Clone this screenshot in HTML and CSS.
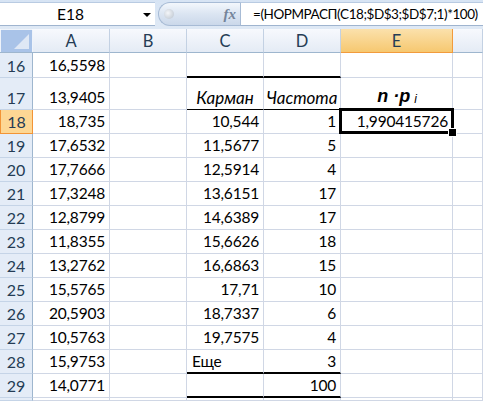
FILE: index.html
```html
<!DOCTYPE html>
<html>
<head>
<meta charset="utf-8">
<link rel="stylesheet" href="styles.css">
</head>
<body>
<div class="app">
  <div class="fbar">
    <div class="namebox"><span class="ref">E18</span><span class="arrow"></span></div>
    <div class="fxpill"><span class="knob"></span><span class="fx">fx</span></div>
    <div class="formula">=(НОРМРАСП(C18;$D$3;$D$7;1)*100)</div>
  </div>
  <div class="sheet">
    <div class="row hdr">
      <div class="corner"><svg width="33" height="24" viewBox="0 0 33 24"><rect x="0.5" y="0.5" width="32" height="23" fill="#a9c3e8" stroke="#ffffff" stroke-opacity="0.6"/><polygon points="29,5 29,20 14,20" fill="#dfe8f5"/></svg></div>
      <div class="ch">A</div><div class="ch">B</div><div class="ch">C</div><div class="ch">D</div><div class="ch sel">E</div><div class="ch"></div>
    </div>
    <div class="row r16">
      <div class="rh">16</div><div class="c num">16,5598</div><div class="c"></div><div class="c thickb"></div><div class="c thickb"></div><div class="c"></div><div class="c"></div>
    </div>
    <div class="row r17">
      <div class="rh">17</div><div class="c num">13,9405</div><div class="c"></div><div class="c it thinb">Карман</div><div class="c it thinb">Частота</div><div class="c npi"><b>n ·p</b><i>i</i></div><div class="c"></div>
    </div>
    <div class="row">
      <div class="rh sel">18</div><div class="c num">18,735</div><div class="c"></div><div class="c num">10,544</div><div class="c num">1</div><div class="c num active">1,990415726</div><div class="c"></div>
    </div>
    <div class="row">
      <div class="rh">19</div><div class="c num">17,6532</div><div class="c"></div><div class="c num">11,5677</div><div class="c num">5</div><div class="c"></div><div class="c"></div>
    </div>
    <div class="row">
      <div class="rh">20</div><div class="c num">17,7666</div><div class="c"></div><div class="c num">12,5914</div><div class="c num">4</div><div class="c"></div><div class="c"></div>
    </div>
    <div class="row">
      <div class="rh">21</div><div class="c num">17,3248</div><div class="c"></div><div class="c num">13,6151</div><div class="c num">17</div><div class="c"></div><div class="c"></div>
    </div>
    <div class="row">
      <div class="rh">22</div><div class="c num">12,8799</div><div class="c"></div><div class="c num">14,6389</div><div class="c num">17</div><div class="c"></div><div class="c"></div>
    </div>
    <div class="row">
      <div class="rh">23</div><div class="c num">11,8355</div><div class="c"></div><div class="c num">15,6626</div><div class="c num">18</div><div class="c"></div><div class="c"></div>
    </div>
    <div class="row">
      <div class="rh">24</div><div class="c num">13,2762</div><div class="c"></div><div class="c num">16,6863</div><div class="c num">15</div><div class="c"></div><div class="c"></div>
    </div>
    <div class="row">
      <div class="rh">25</div><div class="c num">15,5765</div><div class="c"></div><div class="c num">17,71</div><div class="c num">10</div><div class="c"></div><div class="c"></div>
    </div>
    <div class="row">
      <div class="rh">26</div><div class="c num">20,5903</div><div class="c"></div><div class="c num">18,7337</div><div class="c num">6</div><div class="c"></div><div class="c"></div>
    </div>
    <div class="row">
      <div class="rh">27</div><div class="c num">10,5763</div><div class="c"></div><div class="c num">19,7575</div><div class="c num">4</div><div class="c"></div><div class="c"></div>
    </div>
    <div class="row">
      <div class="rh">28</div><div class="c num">15,9753</div><div class="c"></div><div class="c thickb">Еще</div><div class="c num thickb">3</div><div class="c"></div><div class="c"></div>
    </div>
    <div class="row">
      <div class="rh">29</div><div class="c num">14,0771</div><div class="c"></div><div class="c thickb"></div><div class="c num thickb">100</div><div class="c"></div><div class="c"></div>
    </div>
    <div class="row r30">
      <div class="rh"></div><div class="c"></div><div class="c"></div><div class="c"></div><div class="c"></div><div class="c"></div><div class="c"></div>
    </div>
  </div>
</div>
</body>
</html>
```

FILE: styles.css
```css
* { box-sizing: border-box; }
html, body { margin: 0; padding: 0; }
body {
  width: 483px;
  height: 401px;
  overflow: hidden;
  background: #ffffff;
  font-family: Lato, "Liberation Sans", sans-serif;
}
.app { display: flex; flex-direction: column; height: 401px; overflow: hidden; }

/* formula bar */
.fbar {
  height: 29px;
  flex-shrink: 0;
  display: flex;
  align-items: flex-start;
  padding-top: 2px;
  background: linear-gradient(#d7e4f4, #dfe9f5);
}
.namebox {
  width: 155px;
  flex-shrink: 0;
  height: 24px;
  background: #fff;
  border-top: 1px solid #b9cbe2;
  border-bottom: 1px solid #9fb4cf;
  position: relative;
  display: flex;
  align-items: center;
  justify-content: center;
  font-size: 15.5px;
  color: #000;
}
.namebox .ref { margin-right: 14px; }
.namebox .arrow {
  position: absolute;
  right: 4px;
  top: 10px;
  width: 0; height: 0;
  border-left: 4px solid transparent;
  border-right: 4px solid transparent;
  border-top: 4px solid #000;
}
.fxpill {
  width: 82px;
  flex-shrink: 0;
  height: 24px;
  margin-left: 3px;
  border: 1px solid #a7bbd5;
  border-right: none;
  border-radius: 12px 0 0 12px;
  background: linear-gradient(#f3f7fc, #dbe5f2 50%, #cbd8ea);
  display: flex;
  align-items: center;
  padding-left: 5px;
}
.knob {
  width: 10px; height: 10px;
  border-radius: 50%;
  background: radial-gradient(circle at 40% 40%, #f4f6f9, #b8c1cc);
}
.fx {
  margin-left: auto;
  margin-right: 4px;
  font-family: "Liberation Serif", serif;
  font-style: italic;
  font-weight: bold;
  font-size: 15px;
  color: #74849a;
}
.formula {
  flex: 1;
  min-width: 0;
  overflow: hidden;
  height: 24px;
  background: #fff;
  border-top: 1px solid #b9cbe2;
  border-bottom: 1px solid #9fb4cf;
  border-left: 1px solid #a7bbd5;
  padding-left: 12px;
  font-size: 13.5px;
  letter-spacing: -0.45px;
  line-height: 22px;
  color: #000;
  white-space: nowrap;
}

/* sheet */
.sheet { display: flex; flex-direction: column; }
.row {
  display: grid;
  grid-template-columns: 33px 77px 77px 77px 77px 112px 1fr;
  height: 24px;
  flex-shrink: 0;
}
.r16 { height: 25px; }
.r17 { height: 32px; }
.r30 { height: 3px; overflow: hidden; }

.hdr { height: 24px; }
.corner { height: 24px; border-bottom: 1px solid #9eb6ce; overflow: hidden; }
.corner svg { display: block; }
.ch {
  background: linear-gradient(#f7f9fd, #e4ebf5);
  border-right: 1px solid #c3d1e3;
  border-bottom: 1px solid #9eb6ce;
  display: flex;
  align-items: center;
  justify-content: center;
  font-size: 16.5px;
  color: #253c55;
}
.ch.sel {
  background: linear-gradient(#fbe1ac, #f6c870);
  border-right: 1px solid #f29b3c;
  border-bottom: 1px solid #f29b3c;
}

.rh {
  background: #e4ecf7;
  border-right: 1px solid #9eb6ce;
  border-bottom: 1px solid #c5d4e7;
  display: flex;
  align-items: flex-end;
  justify-content: center;
  padding-bottom: 2px;
  font-size: 16px;
  line-height: 19px;
  color: #253c55;
}
.rh.sel {
  background: #fdd794;
  border: 1px solid #f29436;
  border-top: none;
}

.c {
  border-right: 1px solid #d0d7e5;
  border-bottom: 1px solid #d0d7e5;
  display: flex;
  align-items: flex-end;
  padding: 0 4px 2px 5px;
  font-size: 15.5px;
  letter-spacing: -0.2px;
  line-height: 19px;
  color: #000;
  white-space: nowrap;
}
.num { justify-content: flex-end; }
.it { font-style: italic; justify-content: center; padding: 0 0 2px 0; font-size: 17px; letter-spacing: 0; }
.thickb { border-bottom: 2px solid #000; padding-bottom: 1px; }
.thinb { border-bottom: 1px solid #000; }
.npi {
  justify-content: center;
  font-family: "Liberation Sans", sans-serif;
  font-size: 18px;
  letter-spacing: 0;
  padding-bottom: 3px;
}
.npi b { font-style: italic; font-weight: bold; }
.npi i { font-size: 12px; margin-left: 4px; position: relative; top: 3px; }

.active { position: relative; }
.active::before {
  content: "";
  position: absolute;
  left: -2px; top: -2px; right: -2px; bottom: -1px;
  border: 3px solid #000;
}
.active::after {
  content: "";
  position: absolute;
  right: -5px; bottom: -4px;
  width: 7px; height: 7px;
  background: #000;
  border: 1px solid #fff;
}
```
